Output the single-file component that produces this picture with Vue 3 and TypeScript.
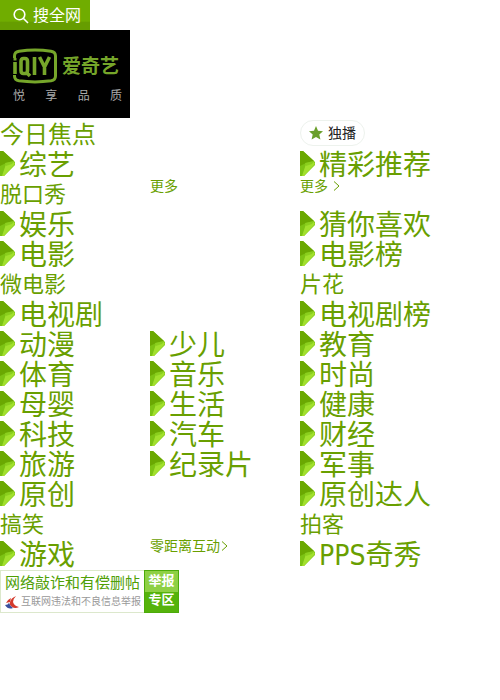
<script setup lang="ts">
type Kind = 'gem' | 'head' | 'sub' | 'more' | 'badge' | 'empty'

interface Cell {
  kind: Kind
  text: string
  arrow?: 'near' | 'spaced'
}

const gem = (text: string): Cell => ({ kind: 'gem', text })
const sub = (text: string): Cell => ({ kind: 'sub', text })
const empty: Cell = { kind: 'empty', text: '' }

const rows: Cell[][] = [
  [{ kind: 'head', text: '今日焦点' }, empty, { kind: 'badge', text: '独播' }],
  [gem('综艺'), empty, gem('精彩推荐')],
  [sub('脱口秀'), { kind: 'more', text: '更多' }, { kind: 'more', text: '更多', arrow: 'spaced' }],
  [gem('娱乐'), empty, gem('猜你喜欢')],
  [gem('电影'), empty, gem('电影榜')],
  [sub('微电影'), empty, sub('片花')],
  [gem('电视剧'), empty, gem('电视剧榜')],
  [gem('动漫'), gem('少儿'), gem('教育')],
  [gem('体育'), gem('音乐'), gem('时尚')],
  [gem('母婴'), gem('生活'), gem('健康')],
  [gem('科技'), gem('汽车'), gem('财经')],
  [gem('旅游'), gem('纪录片'), gem('军事')],
  [gem('原创'), empty, gem('原创达人')],
  [sub('搞笑'), empty, sub('拍客')],
  [gem('游戏'), { kind: 'more', text: '零距离互动', arrow: 'near' }, gem('PPS奇秀')],
]
</script>

<template>
  <main class="page">
    <button type="button" class="search">
      <svg class="search-icon" viewBox="0 0 16 16" aria-hidden="true">
        <circle cx="6.5" cy="6.5" r="5.3" />
        <path d="M10.5 10.5L15 15" />
      </svg>
      <span>搜全网</span>
    </button>

    <a href="#" class="brand">
      <span class="brand-top">
        <svg class="brand-mark" viewBox="0 0 44 36" aria-hidden="true">
          <path class="frame" d="M1.5 10V8Q1.5 4 6 3.200Q22 1 38 3.200Q42.5 4 42.5 8V28Q42.5 32 38 32.800Q22 35 6 32.800Q1.5 32 1.5 28V27" />
          <path class="letters" d="M2 14V26M10.500 10.500Q8 10.500 8 13.500V22.500Q8 25.500 10.500 25.500H12Q14.500 25.500 14.500 22.500V13.500Q14.500 10.500 12 10.500ZM13 24L17 28M21.500 9V27M26.500 9L31.500 19L36.500 9M31.500 17V27" />
          <path class="dot" d="M.5 10H3.500V12.500H.5Z" />
        </svg>
        <strong class="brand-name">爱奇艺</strong>
      </span>
      <span class="slogan"><span>悦</span><span>享</span><span>品</span><span>质</span></span>
    </a>

    <nav class="channels">
      <template v-for="(row, r) in rows" :key="r">
        <div v-for="(cell, c) in row" :key="c" class="cell">
          <a v-if="cell.kind !== 'empty'" href="#" :class="['link', cell.kind]">
            <svg v-if="cell.kind === 'gem'" class="gem-icon" viewBox="0 0 15 25" aria-hidden="true">
              <path fill="#7cc314" d="M0 0H3L15 11V14L4 25H0Z" />
              <path fill="#6aa802" d="M0 0H3L14 10L6 12L0 15Z" />
              <path fill="#a2e02d" d="M6 13L14 11L15 13L4 25H2Z" />
              <path fill="#8bcf1e" d="M5 12L14 10L12 13L6 15Z" />
            </svg>
            <svg v-if="cell.kind === 'badge'" class="star" viewBox="0 0 14 14" aria-hidden="true">
              <path d="M7 0L9 4.700L14 5.200L10.300 8.500L11.400 13.500L7 10.900L2.600 13.500L3.700 8.500L0 5.200L5 4.700Z" />
            </svg>
            <span>{{ cell.text }}</span>
            <svg v-if="cell.arrow" :class="['arrow', cell.arrow]" viewBox="0 0 7 10" aria-hidden="true">
              <path d="M1 .5L6 5L1 9.500" />
            </svg>
          </a>
        </div>
      </template>
    </nav>

    <a href="#" class="report">
      <span class="report-text">
        <span class="report-title">网络敲诈和有偿删帖</span>
        <span class="report-note">
          <svg class="report-logo" viewBox="0 0 14 13" aria-hidden="true">
            <path fill="#d43a2c" d="M11 0Q8 3 8 6Q9 10 14 11Q10 13 7 11Q4 9 5 6Q6 2 11 0Z" />
            <path fill="#d43a2c" d="M6 2Q2 4 1 7L5 6Z" />
            <path fill="#3a4f9c" d="M0 9Q3 9 4 7Q5 10 8 12Q3 14 0 9Z" />
          </svg>
          <span>互联网违法和不良信息举报</span>
        </span>
      </span>
      <span class="report-zone"><span class="zone-top">举报</span><span class="zone-bottom">专区</span></span>
    </a>
  </main>
</template>

<style>
body {
  margin: 0;
  background: #fff;
}
</style>

<style scoped>
.page {
  display: flex;
  flex-direction: column;
  align-items: flex-start;
  font-family: "DejaVu Sans Condensed", "Noto Sans CJK SC", sans-serif;
  color: #699f00;
}

a {
  color: inherit;
  text-decoration: none;
}

.search {
  display: flex;
  align-items: center;
  gap: 4px;
  height: 30px;
  padding: 2px 9px 0 13px;
  border: 0;
  background: linear-gradient(#70ad00 70%, #669d00 75%);
  color: #fff;
  font-family: inherit;
  font-size: 16px;
  line-height: 28px;
}

.search-icon {
  width: 16px;
  height: 16px;
  fill: none;
  stroke: #fff;
  stroke-width: 1.6;
}

.brand {
  display: flex;
  flex-direction: column;
  gap: 3px;
  box-sizing: border-box;
  width: 130px;
  height: 88px;
  padding: 18px 8px 0 13px;
  background: #000;
}

.brand-top {
  display: flex;
  align-items: center;
  gap: 5px;
  color: #76a62a;
}

.brand-mark {
  width: 44px;
  height: 36px;
}

.brand-mark path {
  fill: none;
  stroke: #76a62a;
  stroke-width: 3;
}

.brand-mark .letters {
  stroke-width: 3.6;
}

.brand-mark .dot {
  fill: #76a62a;
  stroke: none;
}

.brand-name {
  font-size: 19px;
  font-weight: 700;
  line-height: 36px;
}

.slogan {
  display: flex;
  justify-content: space-between;
  color: #aaa;
  font-size: 12px;
  line-height: 18px;
}

.channels {
  display: grid;
  grid-template-columns: 30% 30% 40%;
  grid-auto-rows: 30px;
  width: 100%;
  padding-top: 2px;
}

.cell {
  display: flex;
  align-items: flex-start;
}

.link {
  display: flex;
  align-items: center;
  line-height: 30px;
  white-space: nowrap;
}

.gem {
  align-items: flex-start;
  gap: 4px;
  font-size: 28px;
  line-height: 32px;
}

.gem-icon {
  width: 15px;
  height: 25px;
  padding-top: 1px;
}

.head {
  font-size: 24px;
}

.sub {
  font-size: 22px;
}

.more {
  font-size: 14px;
  line-height: 12px;
}

.arrow {
  width: 7px;
  height: 10px;
  fill: none;
  stroke: #699f00;
}

.arrow.near {
  margin-left: 1px;
}

.arrow.spaced {
  margin-left: 5px;
}

.badge {
  gap: 5px;
  box-sizing: border-box;
  height: 26px;
  padding: 0 8px;
  border: 1px solid #edf2ed;
  border-radius: 13px;
  color: #222;
  font-size: 14px;
  line-height: 24px;
}

.star {
  width: 14px;
  height: 14px;
  fill: #699f2a;
}

.report {
  display: flex;
  height: 43px;
}

.report-text {
  box-sizing: border-box;
  width: 144px;
  padding: 1px 0 0 4px;
  border: 1px solid #dce8cc;
  border-right: 0;
  white-space: nowrap;
}

.report-title {
  display: block;
  font-size: 15px;
  line-height: 22px;
  color: #50a005;
}

.report-note {
  display: flex;
  align-items: center;
  gap: 2px;
  color: #999;
  font-size: 10px;
  line-height: 16px;
}

.report-logo {
  flex: none;
  width: 14px;
  height: 13px;
}

.report-zone {
  display: grid;
  grid-template-rows: 1fr 1fr;
  box-sizing: border-box;
  width: 35px;
  border: 1px solid #4cab0a;
  color: #fff;
  font-size: 13px;
  font-weight: 700;
  text-align: center;
}

.zone-top {
  background: #8ed044;
  line-height: 20px;
}

.zone-bottom {
  background: #55b30b;
  line-height: 16px;
}
</style>
